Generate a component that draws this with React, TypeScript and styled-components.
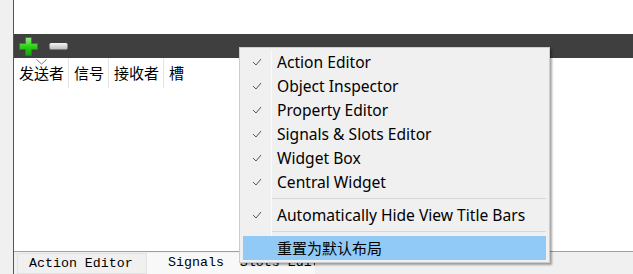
import styled, { createGlobalStyle } from "styled-components";

const GlobalStyle = createGlobalStyle`
  html, body {
    margin: 0;
    padding: 0;
    background: #ffffff;
  }
  #root {
    width: 633px;
    height: 274px;
    overflow: hidden;
  }
`;

const Window = styled.div`
  position: relative;
  display: flex;
  flex-direction: row;
  width: 633px;
  height: 274px;
  font-family: "Noto Sans", "Noto Sans CJK SC", sans-serif;
`;

const SideStrip = styled.div`
  width: 13px;
  background: #f0f0f0;
  border-right: 1px solid #555555;
`;

const Main = styled.div`
  flex: 1;
  display: flex;
  flex-direction: column;
  min-width: 0;
`;

const TopArea = styled.div`
  height: 34px;
  background: #ffffff;
`;

const Toolbar = styled.div`
  height: 24px;
  background: #3f3f3f;
  display: flex;
  align-items: center;
  gap: 11px;
  padding-left: 5px;
`;

const HeaderRow = styled.div`
  position: relative;
  display: flex;
  height: 30px;
  background: #ffffff;
`;

const HeaderCell = styled.div<{ $w?: number }>`
  width: ${(p) => (p.$w ? `${p.$w}px` : "auto")};
  padding-left: 5px;
  box-sizing: border-box;
  border-right: ${(p) => (p.$w ? "1px solid #e3e3e3" : "none")};
  font-family: "Noto Sans CJK SC", sans-serif;
  font-size: 15px;
  line-height: 30px;
  color: #000000;
`;

const SortMark = styled.svg`
  position: absolute;
  left: 22px;
  top: 1px;
`;

const Content = styled.div`
  flex: 1;
  background: #ffffff;
`;

const TabBar = styled.div`
  height: 22px;
  border-top: 1px solid #a0a0a0;
  background: #f0f0f0;
  display: flex;
  align-items: stretch;
  padding-left: 3px;
`;

const Tab = styled.div<{ $w: number; $active?: boolean }>`
  width: ${(p) => p.$w}px;
  box-sizing: border-box;
  overflow: hidden;
  white-space: pre;
  font-family: "Liberation Mono", monospace;
  font-size: 13.3px;
  line-height: 19px;
  color: #000000;
  padding-left: ${(p) => (p.$active ? 11 : 21)}px;
  margin-top: 1px;
  background: ${(p) => (p.$active ? "#f0f0f0" : "#f8f8f8")};
  border: ${(p) => (p.$active ? "1px solid #e2e2e2" : "none")};
`;

const Menu = styled.div`
  position: absolute;
  left: 239px;
  top: 47px;
  width: 311px;
  box-sizing: border-box;
  background: #f0f0f0;
  border: 1px solid #cccccc;
  box-shadow: 2px 2px 2px rgba(0, 0, 0, 0.35);
  padding: 2px 3px 2px 3px;
`;

const Item = styled.div<{ $hl?: boolean }>`
  display: flex;
  align-items: center;
  height: 24px;
  background: ${(p) => (p.$hl ? "#91c9f7" : "transparent")};
`;

const CheckCol = styled.div<{ $plain?: boolean }>`
  width: 29px;
  height: 100%;
  display: flex;
  align-items: center;
  justify-content: center;
  border-right: ${(p) => (p.$plain ? "none" : "1px solid #fbfbfb")};
  box-sizing: border-box;
`;

const Label = styled.span<{ $cjk?: boolean }>`
  padding-left: 5px;
  font-family: ${(p) =>
    p.$cjk ? `"Noto Sans CJK SC", sans-serif` : `"Noto Sans", "Noto Sans CJK SC", sans-serif`};
  font-size: ${(p) => (p.$cjk ? 15 : 15.6)}px;
  line-height: 22px;
  color: #000000;
  white-space: nowrap;
`;

const Separator = styled.div`
  display: flex;
  height: 9px;
`;

const SepGap = styled.div`
  width: 29px;
  border-right: 1px solid #fbfbfb;
  box-sizing: border-box;
`;

const SepLine = styled.div`
  flex: 1;
  margin-top: 4px;
  height: 1px;
  background: #d7d7d7;
`;

const Check = () => (
  <svg width="10" height="8" viewBox="0 0 10 8">
    <path d="M1 4 L4 7 L9 1" fill="none" stroke="#555" strokeWidth="1" />
  </svg>
);

const PlusIcon = () => (
  <svg width="19" height="19" viewBox="0 0 19 19">
    <defs>
      <linearGradient id="pg" x1="0" y1="0" x2="0" y2="1">
        <stop offset="0" stopColor="#8ef07a" />
        <stop offset="0.5" stopColor="#2fcf1a" />
        <stop offset="1" stopColor="#12a30a" />
      </linearGradient>
    </defs>
    <path d="M6.5 0.5 H12.5 V6.5 H18.5 V12.5 H12.5 V18.5 H6.5 V12.5 H0.5 V6.5 H6.5 Z" fill="url(#pg)" stroke="#1b8f10" strokeWidth="0.8" />
  </svg>
);

const MinusIcon = () => (
  <svg width="19" height="19" viewBox="0 0 19 19">
    <defs>
      <linearGradient id="mg" x1="0" y1="0" x2="0" y2="1">
        <stop offset="0" stopColor="#f4f4f4" />
        <stop offset="1" stopColor="#b9b9b9" />
      </linearGradient>
    </defs>
    <rect x="0.5" y="6" width="18" height="6.5" rx="1.5" fill="url(#mg)" />
  </svg>
);

const items = [
  "Action Editor",
  "Object Inspector",
  "Property Editor",
  "Signals & Slots Editor",
  "Widget Box",
  "Central Widget",
];

export default function App() {
  return (
    <Window>
      <GlobalStyle />
      <SideStrip />
      <Main>
        <TopArea />
        <Toolbar>
          <PlusIcon />
          <MinusIcon />
        </Toolbar>
        <HeaderRow>
          <SortMark width="11" height="6" viewBox="0 0 11 6">
            <path d="M0.5 0.5 L5.5 5 L10.5 0.5" fill="none" stroke="#777" strokeWidth="1" />
          </SortMark>
          <HeaderCell $w={55}>发送者</HeaderCell>
          <HeaderCell $w={40}>信号</HeaderCell>
          <HeaderCell $w={55}>接收者</HeaderCell>
          <HeaderCell>槽</HeaderCell>
        </HeaderRow>
        <Content />
        <TabBar>
          <Tab $w={130} $active>Action Editor</Tab>
          <Tab $w={168}>{"Signals  Slots Editor"}</Tab>
        </TabBar>
      </Main>
      <Menu>
        {items.map((t) => (
          <Item key={t}>
            <CheckCol>
              <Check />
            </CheckCol>
            <Label>{t}</Label>
          </Item>
        ))}
        <Separator>
          <SepGap />
          <SepLine />
        </Separator>
        <Item>
          <CheckCol>
            <Check />
          </CheckCol>
          <Label>Automatically Hide View Title Bars</Label>
        </Item>
        <Separator>
          <SepGap />
          <SepLine />
        </Separator>
        <Item $hl>
          <CheckCol $plain />
          <Label $cjk>重置为默认布局</Label>
        </Item>
      </Menu>
    </Window>
  );
}
